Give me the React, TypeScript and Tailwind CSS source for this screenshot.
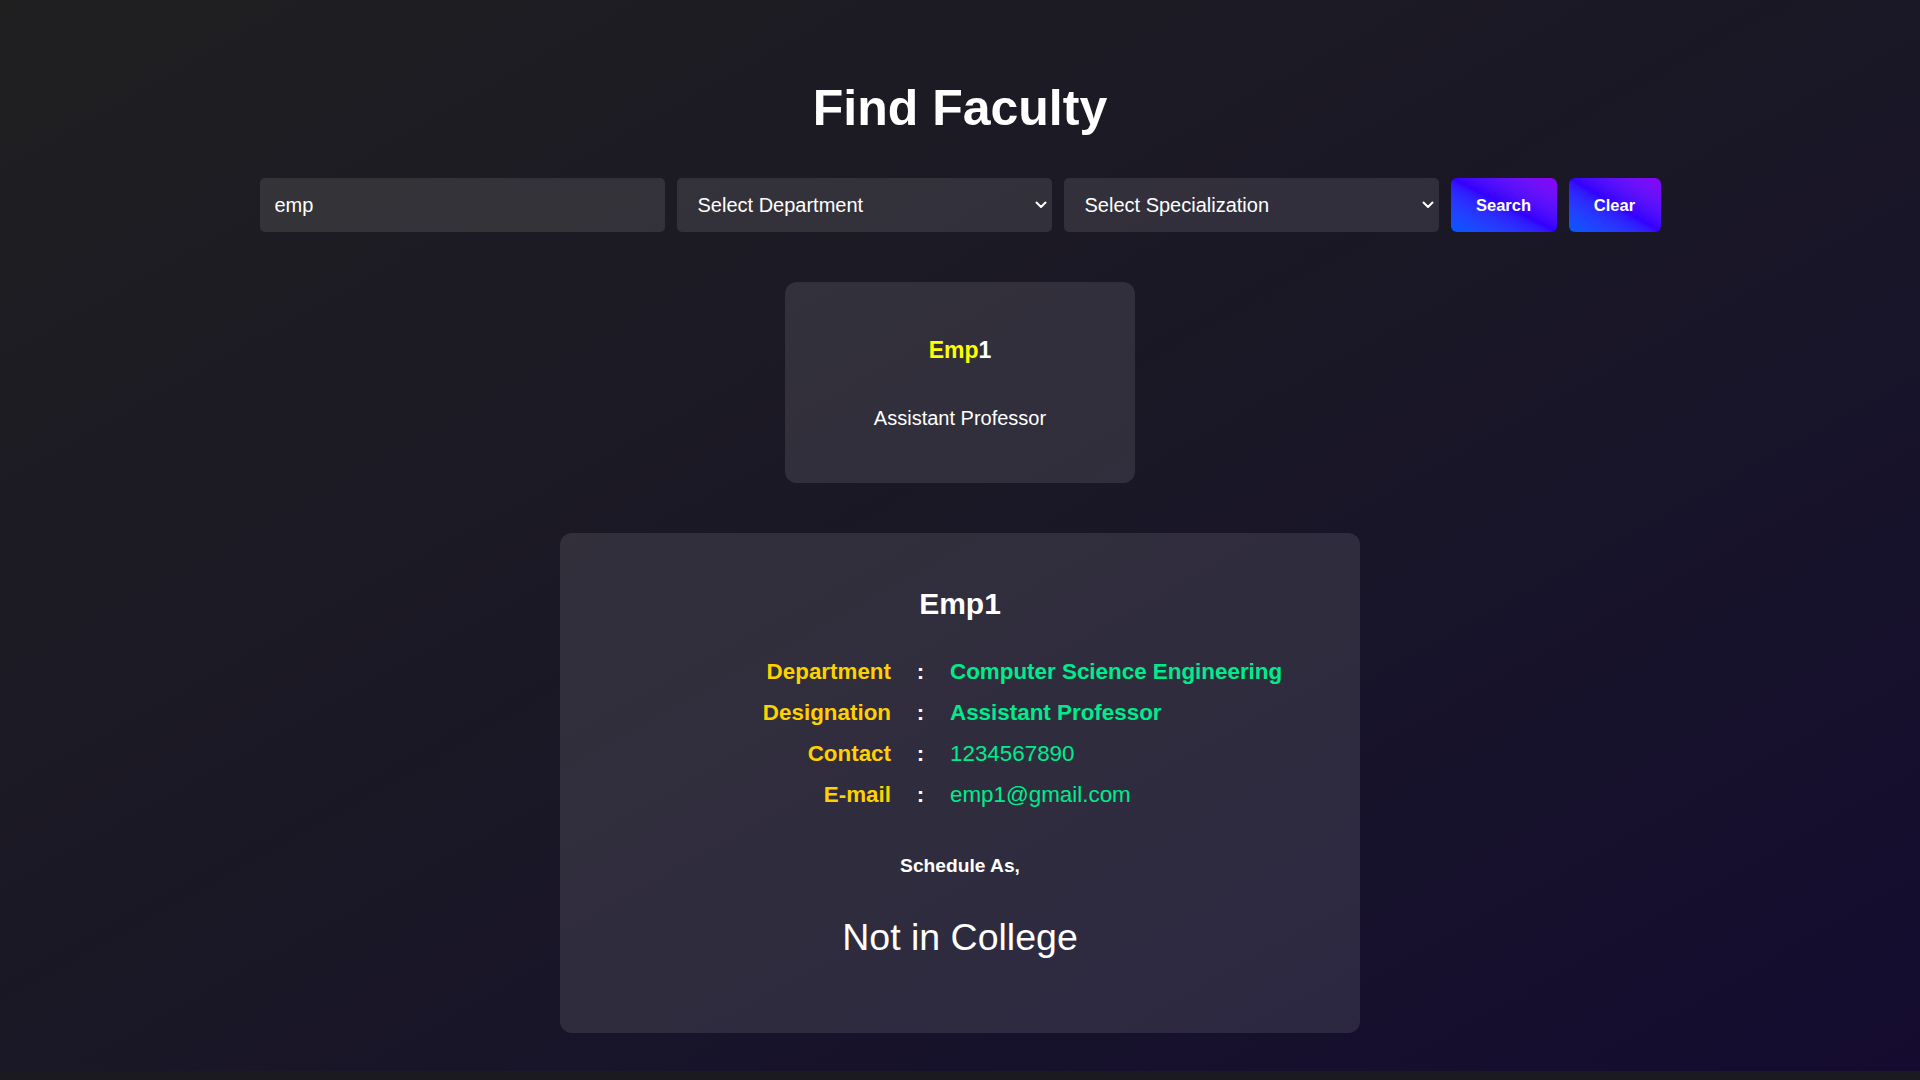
import React from "react";

function Chevron() {
  return (
    <svg
      width="12"
      height="8"
      viewBox="0 0 12 8"
      fill="none"
      className="pointer-events-none absolute right-[5px] top-1/2 -translate-y-1/2"
    >
      <path d="M1.5 1.5 L6 6 L10.5 1.5" stroke="white" strokeWidth="2" strokeLinecap="round" strokeLinejoin="round" />
    </svg>
  );
}

function SelectBox({ label, width }: { label: string; width: string }) {
  return (
    <div className={`relative h-[54px] ${width}`}>
      <select
        defaultValue=""
        className="h-full w-full appearance-none rounded-[5px] bg-white/10 pl-[21px] pr-[24px] text-[20px] text-white outline-none"
      >
        <option value="" className="bg-[#2b2a31]">{label}</option>
      </select>
      <Chevron />
    </div>
  );
}

const rows: { label: string; value: string; bold: boolean }[] = [
  { label: "Department", value: "Computer Science Engineering", bold: true },
  { label: "Designation", value: "Assistant Professor", bold: true },
  { label: "Contact", value: "1234567890", bold: false },
  { label: "E-mail", value: "emp1@gmail.com", bold: false },
];

export default function App() {
  return (
    <div className="h-screen w-full overflow-hidden bg-[#1b1a21] font-['Liberation_Sans',Arial,sans-serif] leading-[normal] text-white">
      <div className="flex h-[1071px] w-full flex-col items-center bg-linear-to-br from-[#1f1f20] via-[#1a1726] to-[#140b30] pt-[79px]">
        <h1 className="text-[50px] font-bold leading-[normal]">Find Faculty</h1>

        <div className="mt-[41px] flex h-[54px] items-stretch gap-[12px]">
          <input
            value="emp"
            readOnly
            className="h-[54px] w-[405px] rounded-[5px] bg-white/10 px-[15px] text-[20px] text-white outline-none"
          />
          <SelectBox label="Select Department" width="w-[375px]" />
          <SelectBox label="Select Specialization" width="w-[375px]" />
          <button className="h-[54px] w-[106px] rounded-[6px] bg-linear-to-tr from-[#0058ff] via-[#3300ff] to-[#8a00f5] text-[16.5px] font-bold text-white">
            Search
          </button>
          <button className="h-[54px] w-[92px] rounded-[6px] bg-linear-to-tr from-[#0058ff] via-[#3300ff] to-[#8a00f5] text-[16.5px] font-bold text-white">
            Clear
          </button>
        </div>

        <div className="mt-[50px] flex w-[350px] flex-col items-center rounded-[12px] bg-white/10 pb-[53px] pt-[55px]">
          <div className="text-[23px] font-bold">
            <span className="text-[#ffff00]">Emp</span>
            <span className="text-white">1</span>
          </div>
          <div className="mt-[43px] text-[20px] text-white">Assistant Professor</div>
        </div>

        <div className="mt-[50px] flex w-[800px] flex-col items-center rounded-[12px] bg-white/10 pb-[74px] pt-[54px]">
          <div className="text-[30px] font-bold">Emp1</div>
          <div className="mt-[30px] flex w-full flex-col">
            {rows.map((r) => (
              <div key={r.label} className="flex h-[41px] items-center text-[22.4px] leading-[41px]">
                <div className="w-[331px] text-right font-bold text-[#ffd100]">{r.label}</div>
                <div className="w-[59px] text-center font-bold text-white">:</div>
                <div className={`flex-1 text-[#00ec8c] ${r.bold ? "font-bold" : "font-normal"}`}>{r.value}</div>
              </div>
            ))}
          </div>
          <div className="mt-[40px] text-[19.2px] font-bold">Schedule As,</div>
          <div className="mt-[39px] text-[37.5px]">Not in College</div>
        </div>
      </div>
    </div>
  );
}
